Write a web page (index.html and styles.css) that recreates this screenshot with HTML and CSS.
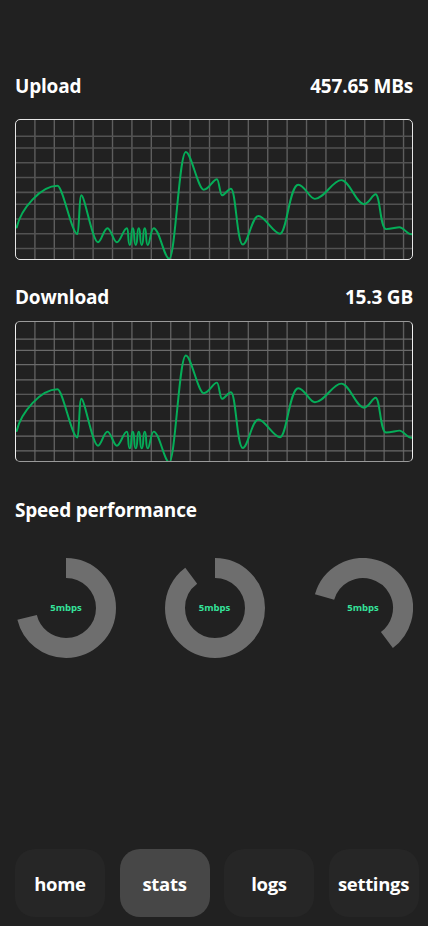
FILE: index.html
```html
<!DOCTYPE html>
<html>
<head>
<meta charset="utf-8">
<link rel="stylesheet" href="styles.css">
</head>
<body>
<div class="app">
  <div class="head head-upload"><span>Upload</span><span>457.65 MBs</span></div>
  <div class="chart chart-upload">
    <svg viewBox="0 0 398 141" preserveAspectRatio="none" class="chart-svg">
      <g class="grid-v">
        <line x1="19" y1="0" x2="19" y2="141"/><line x1="38.5" y1="0" x2="38.5" y2="141"/><line x1="58" y1="0" x2="58" y2="141"/><line x1="77.5" y1="0" x2="77.5" y2="141"/><line x1="97" y1="0" x2="97" y2="141"/><line x1="116.5" y1="0" x2="116.5" y2="141"/><line x1="136" y1="0" x2="136" y2="141"/><line x1="155.5" y1="0" x2="155.5" y2="141"/><line x1="175" y1="0" x2="175" y2="141"/><line x1="194.5" y1="0" x2="194.5" y2="141"/><line x1="214" y1="0" x2="214" y2="141"/><line x1="233.5" y1="0" x2="233.5" y2="141"/><line x1="253" y1="0" x2="253" y2="141"/><line x1="272.5" y1="0" x2="272.5" y2="141"/><line x1="292" y1="0" x2="292" y2="141"/><line x1="311.5" y1="0" x2="311.5" y2="141"/><line x1="331" y1="0" x2="331" y2="141"/><line x1="350.5" y1="0" x2="350.5" y2="141"/><line x1="370" y1="0" x2="370" y2="141"/><line x1="389.5" y1="0" x2="389.5" y2="141"/>
      </g>
      <g class="grid-h">
        <line x1="0" y1="16.4" x2="398" y2="16.4"/><line x1="0" y1="28.4" x2="398" y2="28.4"/><line x1="0" y1="43.4" x2="398" y2="43.4"/><line x1="0" y1="58.4" x2="398" y2="58.4"/><line x1="0" y1="73.4" x2="398" y2="73.4"/><line x1="0" y1="85.4" x2="398" y2="85.4"/><line x1="0" y1="100.4" x2="398" y2="100.4"/><line x1="0" y1="115.4" x2="398" y2="115.4"/><line x1="0" y1="130.4" x2="398" y2="130.4"/>
      </g>
      <path class="wave" d="M0.7 109 C5 90 25 66.7 41.7 66.7 C47 66.7 56 115.7 61.7 115.7 C63.5 115.7 63.5 76.4 65.7 76.4 C69 76.4 77 124 82.4 124 C86 124 88 109.7 92 109.7 C95.5 109.7 98 124 101.4 124 C105 124 108 109.7 111.4 109.7 C113.6 109.7 112 126.7 114.4 126.7 C116.6 126.7 115.2 109.7 117.4 109.7 C119.6 109.7 118 126.7 120.4 126.7 C122.6 126.7 121.2 109.7 123.4 109.7 C125.6 109.7 124 126.7 126.4 126.7 C128.6 126.7 127.2 109.7 129.4 109.7 C131.6 109.7 130 126.7 132.4 126.7 C134.6 126.7 135.4 109.7 138.4 109.7 C144 109.7 149 140.7 154 140.7 C160 140.7 164 32.4 170.7 32.4 C176 32.4 183 70.7 188.7 70.7 C194 70.7 198 60 202 60 C204 60 205 76.4 207 76.4 C210 76.4 213 69.7 216 69.7 C221 69.7 222 126.4 228 126.4 C233 126.4 237 97.4 243.7 97.4 C250 97.4 259 115.4 265.4 115.4 C272 115.4 275 65.7 283.7 65.7 C290 65.7 295 80 300.4 80 C310 80 318 61 327 61 C335 61 342 85.4 349.7 85.4 C355 85.4 358 75.4 361.4 75.4 C366 75.4 366 110.7 372 110.7 C377 110.7 382 108.7 385.4 108.7 C390 108.7 392 116 398 116"/>
    </svg>
  </div>

  <div class="head head-download"><span>Download</span><span>15.3 GB</span></div>
  <div class="chart chart-download">
    <svg viewBox="0 0 398 141" preserveAspectRatio="none" class="chart-svg">
      <g class="grid-v">
        <line x1="19" y1="0" x2="19" y2="141"/><line x1="38.5" y1="0" x2="38.5" y2="141"/><line x1="58" y1="0" x2="58" y2="141"/><line x1="77.5" y1="0" x2="77.5" y2="141"/><line x1="97" y1="0" x2="97" y2="141"/><line x1="116.5" y1="0" x2="116.5" y2="141"/><line x1="136" y1="0" x2="136" y2="141"/><line x1="155.5" y1="0" x2="155.5" y2="141"/><line x1="175" y1="0" x2="175" y2="141"/><line x1="194.5" y1="0" x2="194.5" y2="141"/><line x1="214" y1="0" x2="214" y2="141"/><line x1="233.5" y1="0" x2="233.5" y2="141"/><line x1="253" y1="0" x2="253" y2="141"/><line x1="272.5" y1="0" x2="272.5" y2="141"/><line x1="292" y1="0" x2="292" y2="141"/><line x1="311.5" y1="0" x2="311.5" y2="141"/><line x1="331" y1="0" x2="331" y2="141"/><line x1="350.5" y1="0" x2="350.5" y2="141"/><line x1="370" y1="0" x2="370" y2="141"/><line x1="389.5" y1="0" x2="389.5" y2="141"/>
      </g>
      <g class="grid-h light">
        <line x1="0" y1="17.3" x2="398" y2="17.3"/><line x1="0" y1="28.7" x2="398" y2="28.7"/><line x1="0" y1="43.3" x2="398" y2="43.3"/><line x1="0" y1="58.7" x2="398" y2="58.7"/><line x1="0" y1="73.3" x2="398" y2="73.3"/><line x1="0" y1="85.3" x2="398" y2="85.3"/><line x1="0" y1="100.3" x2="398" y2="100.3"/><line x1="0" y1="115.7" x2="398" y2="115.7"/><line x1="0" y1="130.7" x2="398" y2="130.7"/>
      </g>
      <path class="wave" transform="translate(0 1.5)" d="M0.7 109 C5 90 25 66.7 41.7 66.7 C47 66.7 56 115.7 61.7 115.7 C63.5 115.7 63.5 76.4 65.7 76.4 C69 76.4 77 124 82.4 124 C86 124 88 109.7 92 109.7 C95.5 109.7 98 124 101.4 124 C105 124 108 109.7 111.4 109.7 C113.6 109.7 112 126.7 114.4 126.7 C116.6 126.7 115.2 109.7 117.4 109.7 C119.6 109.7 118 126.7 120.4 126.7 C122.6 126.7 121.2 109.7 123.4 109.7 C125.6 109.7 124 126.7 126.4 126.7 C128.6 126.7 127.2 109.7 129.4 109.7 C131.6 109.7 130 126.7 132.4 126.7 C134.6 126.7 135.4 109.7 138.4 109.7 C144 109.7 149 140.7 154 140.7 C160 140.7 164 32.4 170.7 32.4 C176 32.4 183 70.7 188.7 70.7 C194 70.7 198 60 202 60 C204 60 205 76.4 207 76.4 C210 76.4 213 69.7 216 69.7 C221 69.7 222 126.4 228 126.4 C233 126.4 237 97.4 243.7 97.4 C250 97.4 259 115.4 265.4 115.4 C272 115.4 275 65.7 283.7 65.7 C290 65.7 295 80 300.4 80 C310 80 318 61 327 61 C335 61 342 85.4 349.7 85.4 C355 85.4 358 75.4 361.4 75.4 C366 75.4 366 110.7 372 110.7 C377 110.7 382 108.7 385.4 108.7 C390 108.7 392 116 398 116"/>
    </svg>
  </div>

  <div class="head head-speed"><span>Speed performance</span></div>
  <div class="donuts">
    <div class="donut">
      <svg viewBox="0 0 100 100" class="donut-svg">
        <circle cx="50" cy="50" r="40" class="ring" stroke-dasharray="178.7 251.33" transform="rotate(-90 50 50)"/>
      </svg>
      <span class="donut-label">5mbps</span>
    </div>
    <div class="donut">
      <svg viewBox="0 0 100 100" class="donut-svg">
        <circle cx="50" cy="50" r="40" class="ring" stroke-dasharray="225.5 251.33" transform="rotate(-90 50 50)"/>
      </svg>
      <span class="donut-label">5mbps</span>
    </div>
    <div class="donut">
      <svg viewBox="0 0 100 100" class="donut-svg">
        <circle cx="50" cy="50" r="40" class="ring" stroke-dasharray="151.5 251.33" transform="rotate(196 50 50)"/>
      </svg>
      <span class="donut-label">5mbps</span>
    </div>
  </div>

  <nav class="nav">
    <div class="nav-btn">home</div>
    <div class="nav-btn active">stats</div>
    <div class="nav-btn">logs</div>
    <div class="nav-btn">settings</div>
  </nav>
</div>
</body>
</html>
```

FILE: styles.css
```css
html, body {
  margin: 0;
  padding: 0;
  background: #212121;
}

body {
  font-family: "Open Sans", "Noto Sans", sans-serif;
  color: #ffffff;
}

.app {
  width: 428px;
  height: 926px;
  box-sizing: border-box;
  padding: 0 15px;
  display: flex;
  flex-direction: column;
  overflow: hidden;
}

.head {
  display: flex;
  justify-content: space-between;
  align-items: baseline;
  font-size: 19px;
  font-weight: 700;
  line-height: 24px;
  letter-spacing: -0.2px;
}

.head-upload { margin-top: 74px; }
.head-download { margin-top: 25px; }
.head-speed { margin-top: 36px; }

.chart {
  width: 398px;
  height: 141px;
  box-sizing: border-box;
  border-radius: 5px;
  overflow: hidden;
  flex: none;
}

.chart-upload {
  margin-top: 21px;
  border: 1px solid #e6e6e6;
}

.chart-download {
  margin-top: 12px;
  border: 1px solid #9a9a9a;
  border-left-color: #f0f0f0;
  border-right-color: #f0f0f0;
}

.chart-svg {
  display: block;
  width: 100%;
  height: 100%;
}

.grid-v line {
  stroke: #5e5e5e;
  stroke-width: 1.4;
}

.grid-h line {
  stroke: #525252;
  stroke-width: 1.6;
}

.grid-h.light line {
  stroke: #6a6a6a;
  stroke-width: 1.2;
}

.wave {
  fill: none;
  stroke: #05ad58;
  stroke-width: 2;
  stroke-linejoin: round;
  stroke-linecap: round;
}

.donuts {
  margin-top: 36px;
  display: flex;
  justify-content: space-between;
  padding-left: 1px;
}

.donut {
  position: relative;
  width: 100px;
  height: 100px;
  flex: none;
}

.donut-svg {
  display: block;
  width: 100px;
  height: 100px;
}

.ring {
  fill: none;
  stroke: #6e6e6e;
  stroke-width: 20;
}

.donut-label {
  position: absolute;
  left: 0;
  right: 0;
  top: 44px;
  text-align: center;
  font-size: 9.5px;
  line-height: 12px;
  font-weight: 700;
  color: #35e49b;
}

.nav {
  margin-top: auto;
  margin-bottom: 9px;
  display: flex;
  gap: 14.5px;
}

.nav-btn {
  flex: none;
  width: 90px;
  height: 68px;
  border-radius: 20px;
  background: #262626;
  display: flex;
  align-items: center;
  justify-content: center;
  font-size: 18.5px;
  font-weight: 700;
  letter-spacing: -0.3px;
}

.nav-btn.active {
  background: #474747;
}
```
